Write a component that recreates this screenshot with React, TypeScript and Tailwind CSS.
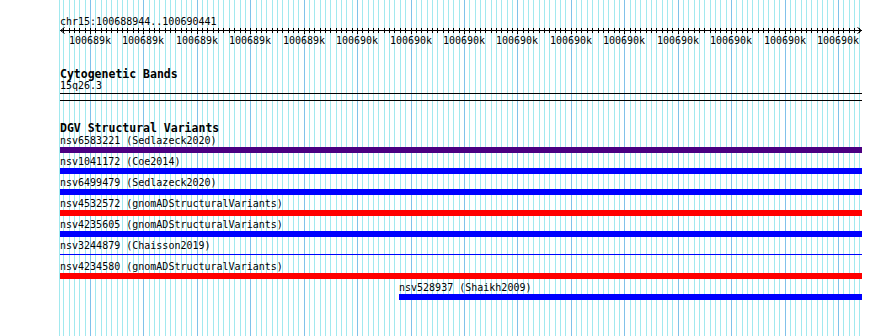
import React from 'react';

const START = 100688944;
const END = 100690441;
const LEFT = 60;
const SCALE = 0.5343; // px per bp

const bpToX = (bp: number) => LEFT + (bp - START) * SCALE;

interface Variant {
    name: string;
    source: string;
    color: string;
    thin?: boolean;
    from?: number; // px offset inside track
}

const variants: Variant[] = [
    { name: 'nsv6583221', source: 'Sedlazeck2020', color: 'bg-[#4b0082]' },
    { name: 'nsv1041172', source: 'Coe2014', color: 'bg-[#0000ff]' },
    { name: 'nsv6499479', source: 'Sedlazeck2020', color: 'bg-[#0000ff]' },
    { name: 'nsv4532572', source: 'gnomADStructuralVariants', color: 'bg-[#ff0000]' },
    { name: 'nsv4235605', source: 'gnomADStructuralVariants', color: 'bg-[#0000ff]' },
    { name: 'nsv3244879', source: 'Chaisson2019', color: 'bg-[#0000ff]', thin: true },
    { name: 'nsv4234580', source: 'gnomADStructuralVariants', color: 'bg-[#ff0000]' },
    { name: 'nsv528937', source: 'Shaikh2009', color: 'bg-[#0000ff]', from: 339 },
];

// Background grid: a line every 10bp, a darker one every 100bp
const GridLines: React.FC = () => {
    const lines: { x: number; major: boolean }[] = [];
    for (let bp = Math.floor(START / 10) * 10; bp <= END; bp += 10) {
        const x = Math.max(59, Math.round(bpToX(bp)));
        lines.push({ x, major: bp % 100 === 0 });
    }
    return (
        <svg className="absolute inset-0 pointer-events-none" width={890} height={336}>
            {lines.map((l, i) => (
                <line
                    key={i}
                    x1={l.x + 0.5}
                    x2={l.x + 0.5}
                    y1={0}
                    y2={336}
                    stroke={l.major ? '#80c2ea' : '#a2e9ef'}
                    strokeWidth={1}
                />
            ))}
        </svg>
    );
};

const Ruler: React.FC = () => {
    const ticks: { x: number; major: boolean; bp: number }[] = [];
    for (let bp = Math.ceil(START / 10) * 10; bp <= END; bp += 10) {
        ticks.push({ x: Math.round(bpToX(bp)) - LEFT, major: bp % 100 === 0, bp });
    }
    return (
        <svg width={802} height={19} className="block" shapeRendering="crispEdges">
            <line x1={0} x2={802} y1={3.5} y2={3.5} stroke="#000" />
            {ticks.map((t, i) => (
                <line
                    key={i}
                    x1={t.x + 0.5}
                    x2={t.x + 0.5}
                    y1={t.major ? 0.5 : 1}
                    y2={t.major ? 7 : 6}
                    stroke="#000"
                />
            ))}
            <path d="M4.5,0.5 L0.5,3.5 L4.5,6.5" fill="none" stroke="#000" shapeRendering="auto" />
            <path d="M797.5,0.5 L801.5,3.5 L797.5,6.5" fill="none" stroke="#000" shapeRendering="auto" />
            {ticks
                .filter((t) => t.major)
                .map((t, i) => (
                    <text
                        key={i}
                        x={t.x}
                        y={16.5}
                        textAnchor="middle"
                        fontSize={10}
                        fontFamily="'DejaVu Sans Mono', monospace"
                        fill="#000"
                    >
                        {Math.round(t.bp / 1000)}k
                    </text>
                ))}
        </svg>
    );
};

export default function App() {
    return (
        <div className="relative w-[890px] h-[336px] bg-white overflow-hidden font-['DejaVu_Sans_Mono',monospace] text-black">
            <GridLines />

            <div className="relative ml-[60px] w-[802px] flex flex-col">
                {/* Location */}
                <div className="pt-[16px] text-[10px] leading-[11px]">chr15:100688944..100690441</div>
                <Ruler />

                {/* Cytogenetic Bands */}
                <div className="mt-[22px] text-[11.5px] leading-[12px] font-bold">Cytogenetic Bands</div>
                <div className="text-[10px] leading-[11px]">15q26.3</div>
                <div className="mt-[2px] h-px bg-black"></div>
                <div className="mt-[6px] h-px bg-black"></div>

                {/* DGV Structural Variants */}
                <div className="mt-[21px] text-[11.5px] leading-[12px] font-bold">DGV Structural Variants</div>
                <div className="mt-[1px] flex flex-col">
                    {variants.map((v) => (
                        <div key={v.name} className="flex flex-col h-[21px]" style={v.from ? { paddingLeft: v.from } : undefined}>
                            <div className="text-[10px] leading-[11px] whitespace-nowrap">
                                {v.name} ({v.source})
                            </div>
                            <div className="mt-[1px] h-[6px]">
                                {v.thin ? (
                                    <div className={`mt-[2px] h-px ${v.color}`}></div>
                                ) : (
                                    <div className={`h-[6px] ${v.color}`}></div>
                                )}
                            </div>
                        </div>
                    ))}
                </div>
            </div>
        </div>
    );
}
